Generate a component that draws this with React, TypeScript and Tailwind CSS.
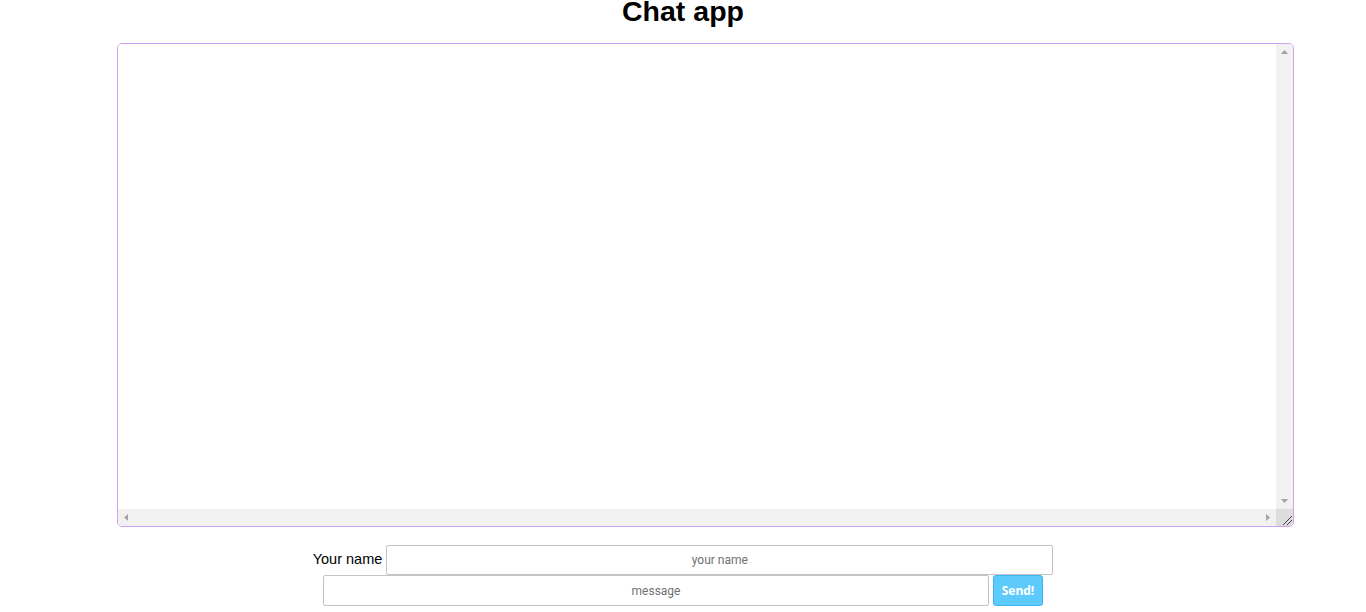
function Arrow({ dir }: { dir: "up" | "down" | "left" | "right" }) {
    const points = {
        up: "0,4 7,4 3.5,0",
        down: "0,0 7,0 3.5,4",
        left: "4,0 4,7 0,3.5",
        right: "0,0 0,7 4,3.5",
    }[dir];
    const vertical = dir === "up" || dir === "down";
    return (
        <svg width={vertical ? 7 : 4} height={vertical ? 4 : 7} className="block">
            <polygon points={points} fill="#a3a3a3" />
        </svg>
    );
}

export default function App() {
    return (
        <div className="bg-white min-h-[612px] font-['Liberation_Sans',Arial,sans-serif] text-black">
            <h1 className="text-center text-[28.5px] leading-[22px] font-bold h-[43px]">Chat app</h1>
            <div className="ml-[117px] w-[1177px] h-[484px] border border-[#d09ff0] rounded-[5px] overflow-hidden grid grid-cols-[1fr_17px] grid-rows-[1fr_17px]">
                <textarea readOnly className="resize-none border-0 outline-none bg-white" />
                <div className="bg-[#f1f1f1] flex flex-col justify-between items-center py-[6px]">
                    <Arrow dir="up" />
                    <Arrow dir="down" />
                </div>
                <div className="bg-[#f1f1f1] flex justify-between items-center px-[6px]">
                    <Arrow dir="left" />
                    <Arrow dir="right" />
                </div>
                <div className="bg-[#dcdcdc] flex items-end justify-end">
                    <svg width="12" height="12" className="block">
                        <line x1="2" y1="11" x2="11" y2="2" stroke="#444" strokeWidth="1" />
                        <line x1="6" y1="11" x2="11" y2="6" stroke="#444" strokeWidth="1" />
                    </svg>
                </div>
            </div>
            <form className="text-center mt-[18px] leading-none">
                <div className="flex justify-center items-center">
                    <label className="text-[14.5px] mr-[4px] -mt-[1px]">Your name</label>
                    <input
                        type="text"
                        placeholder="your name"
                        className="w-[667px] h-[30px] border border-[#c4c4c4] rounded-[2px] text-center text-[12px] font-['Roboto',sans-serif] placeholder:text-[#707070] outline-none"
                    />
                </div>
                <div className="flex justify-center items-center">
                    <input
                        type="text"
                        placeholder="message"
                        className="w-[666px] h-[31px] border border-[#c4c4c4] rounded-[2px] text-center text-[12px] font-['Roboto',sans-serif] placeholder:text-[#707070] outline-none"
                    />
                    <button
                        type="button"
                        className="ml-[4px] w-[50px] h-[31px] bg-[#5ccbfc] border border-[#3bb6f2] rounded-[3px] text-white text-[12px] font-bold font-['Open_Sans',sans-serif]"
                    >
                        Send!
                    </button>
                </div>
            </form>
        </div>
    );
}
